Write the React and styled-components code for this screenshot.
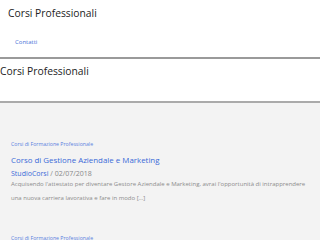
import React from "react";
import styled, { createGlobalStyle } from "styled-components";

const Global = createGlobalStyle`
  html, body { margin: 0; padding: 0; background: #fff; }
  body { font-family: "Open Sans", "Noto Sans", sans-serif; width: 320px; height: 240px; overflow: hidden; }
  * { box-sizing: border-box; }
`;

const Header = styled.header`
  padding: 6px 8px 0;
  height: 59px;
  border-bottom: 2px solid #9a9a9a;
`;

const SiteTitle = styled.h1`
  margin: 0;
  font-size: 10.3px;
  line-height: 14px;
  font-weight: 400;
  color: #222;
`;

const Nav = styled.nav`
  margin-top: 17px;
  padding-left: 7px;
  font-size: 6px;
  line-height: 10px;
`;

const NavLink = styled.a`
  font-size: 6px;
  line-height: 10px;
  color: #4a72d8;
  text-decoration: none;
`;

const PageHead = styled.div`
  height: 44px;
  padding-top: 5px;
  border-bottom: 2px solid #aaa;
`;

const PageTitle = styled.h2`
  margin: 0;
  font-size: 10.3px;
  line-height: 14px;
  font-weight: 400;
  color: #222;
`;

const Main = styled.main`
  background: #f3f3f3;
  padding: 37px 11px 0;
  height: 200px;
`;

const Post = styled.article`
  margin-bottom: 29px;
`;

const Category = styled.a`
  display: block;
  font-size: 5.2px;
  line-height: 8px;
  color: #5a7fe0;
  text-decoration: none;
`;

const PostTitle = styled.h3`
  margin: 6px 0 0;
  font-size: 7.9px;
  line-height: 12px;
  font-weight: 400;
  color: #3a6ad8;
`;

const Meta = styled.div`
  margin-top: 2px;
  font-size: 7px;
  line-height: 12px;
  color: #888;
`;

const Author = styled.span`
  color: #3a6ad8;
`;

const Excerpt = styled.p`
  margin: -3px 0 0;
  font-size: 6px;
  line-height: 14px;
  color: #8c8c8c;
`;

export default function App() {
  return (
    <>
      <Global />
      <Header>
        <SiteTitle>Corsi Professionali</SiteTitle>
        <Nav>
          <NavLink href="#">Contatti</NavLink>
        </Nav>
      </Header>
      <PageHead>
        <PageTitle>Corsi Professionali</PageTitle>
      </PageHead>
      <Main>
        <Post>
          <Category href="#">Corsi di Formazione Professionale</Category>
          <PostTitle>Corso di Gestione Aziendale e Marketing</PostTitle>
          <Meta>
            <Author>StudioCorsi</Author> / 02/07/2018
          </Meta>
          <Excerpt>
            Acquisendo l'attestato per diventare Gestore Aziendale e Marketing, avrai l'opportunità di intrapprendere una nuova carriera lavorativa e fare in modo […]
          </Excerpt>
        </Post>
        <Post>
          <Category href="#">Corsi di Formazione Professionale</Category>
        </Post>
      </Main>
    </>
  );
}
